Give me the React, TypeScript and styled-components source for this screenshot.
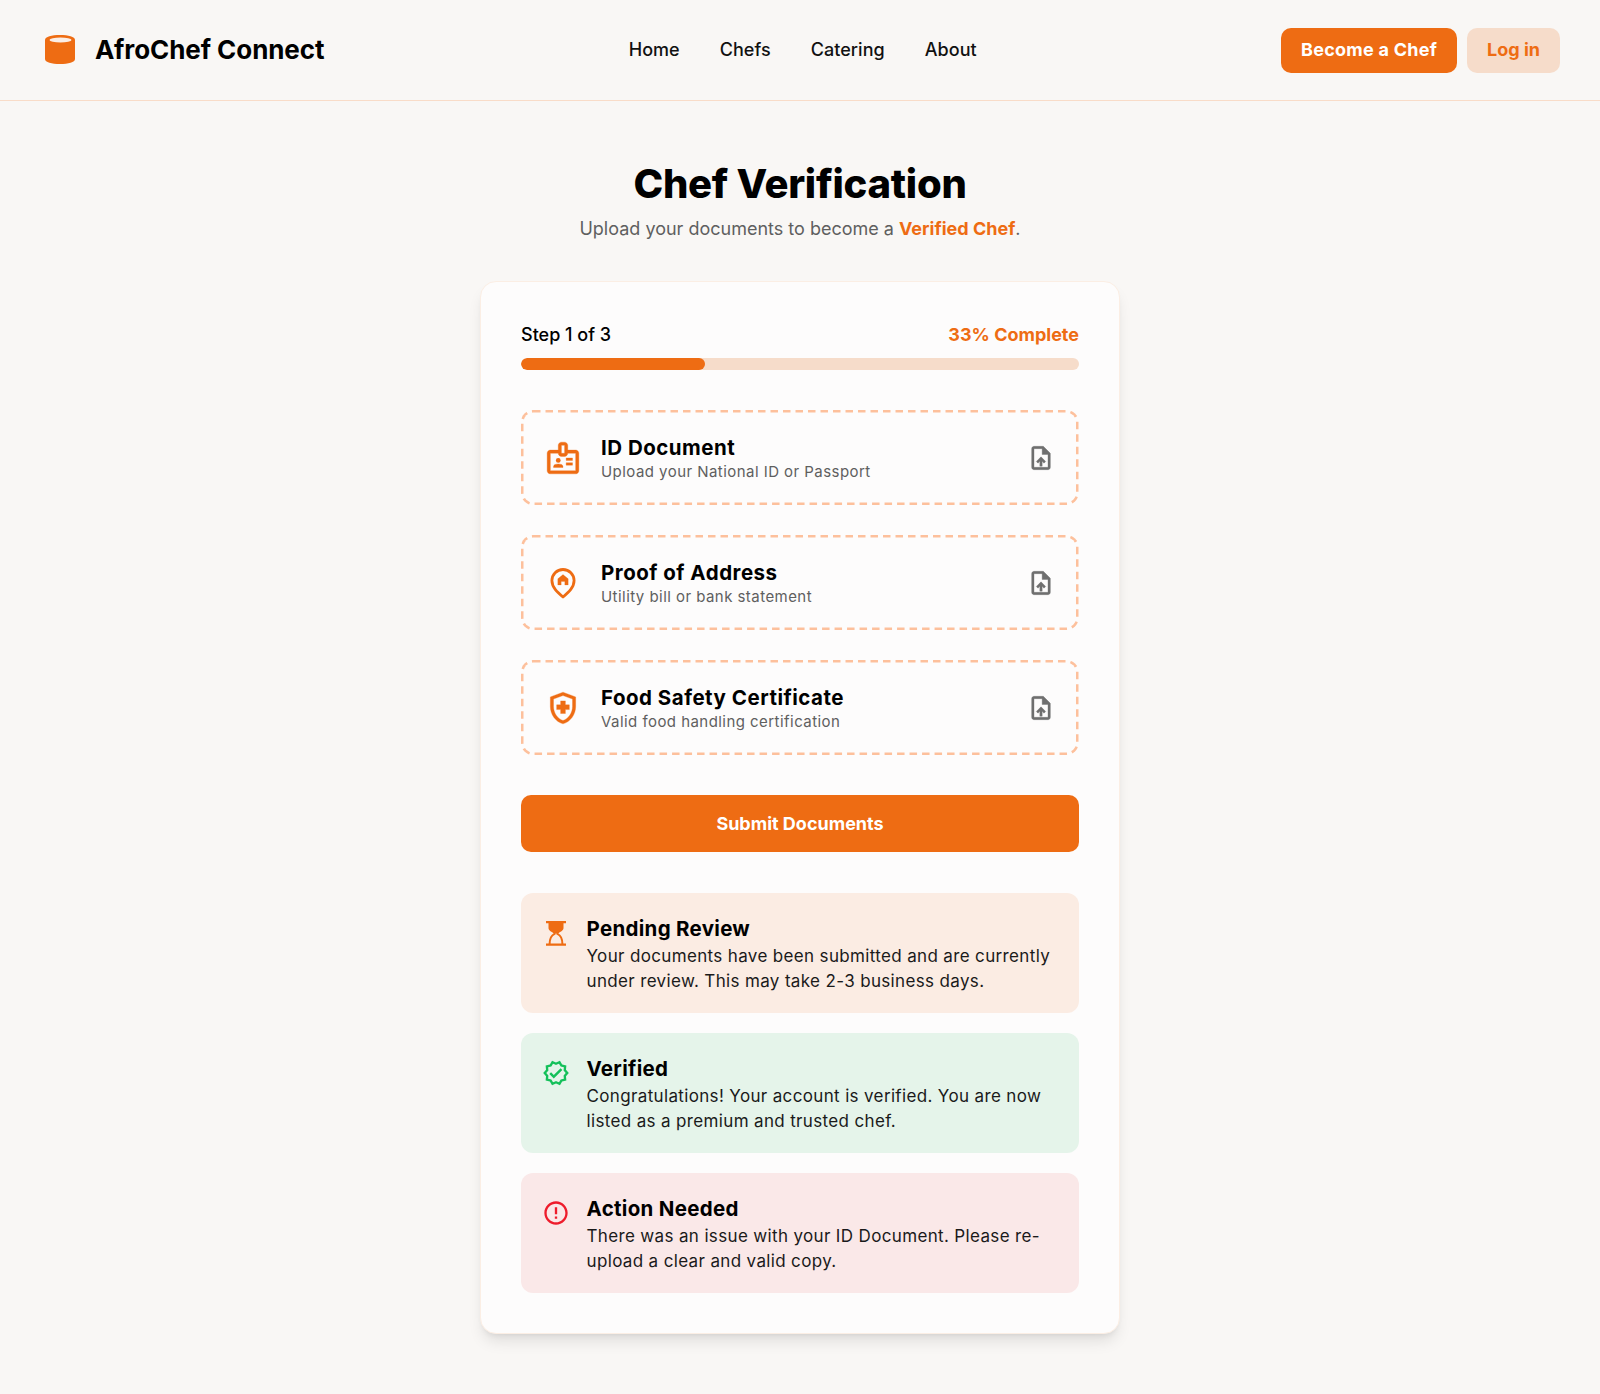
import React from "react";
import styled, { createGlobalStyle } from "styled-components";
import { MdOutlineBadge, MdOutlineUploadFile, MdOutlineHealthAndSafety, MdOutlineVerified, MdErrorOutline } from "react-icons/md";

const ORANGE = "#ee6c13";
const FONT = `Inter, "Noto Sans", "Liberation Sans", sans-serif`;

const Global = createGlobalStyle`
  html, body { margin: 0; padding: 0; background: #f9f7f5; }
  body { font-family: ${FONT}; color: #000; }
  *, *::before, *::after { box-sizing: border-box; }
`;

const Page = styled.div`
  min-height: 1394px;
  display: flex;
  flex-direction: column;
`;
const Header = styled.header`
  height: 101px;
  border-bottom: 1px solid #f9dcc8;
  padding: 0 40px;
  display: flex;
  align-items: center;
  justify-content: space-between;
`;
const Brand = styled.div`
  display: flex;
  align-items: center;
  gap: 15px;
`;
const BrandName = styled.span`
  font-size: 26px;
  line-height: 32px;
  padding-bottom: 1px;
  font-weight: 700;
  letter-spacing: -0.08px;
`;
const Nav = styled.nav`
  display: flex;
  gap: 40px;
  padding-bottom: 2px;
`;
const NavLink = styled.a`
  font-size: 18px;
  font-weight: 500;
  color: #111;
  letter-spacing: 0.05px;
`;
const Actions = styled.div`
  display: flex;
  gap: 10px;
`;
const HeaderButton = styled.button<{ $primary?: boolean }>`
  height: 45px;
  padding: 0 20px 2px;
  border: none;
  border-radius: 10px;
  font-family: ${FONT};
  font-size: 18px;
  font-weight: 700;
  letter-spacing: ${(p) => (p.$primary ? "0.25px" : "0")};
  background: ${(p) => (p.$primary ? ORANGE : "#f6dcca")};
  color: ${(p) => (p.$primary ? "#fff" : ORANGE)};
`;
const Main = styled.main`
  display: flex;
  flex-direction: column;
  align-items: center;
  padding-top: 59px;
`;
const Title = styled.h1`
  margin: 0;
  font-size: 40px;
  line-height: 48px;
  font-weight: 800;
  letter-spacing: -0.26px;
`;
const Subtitle = styled.p`
  margin: 7px 0 0;
  font-size: 18px;
  line-height: 28px;
  color: #5f5f5f;
`;
const Accent = styled.span`
  color: ${ORANGE};
  font-weight: 700;
`;
const Card = styled.section`
  width: 640px;
  margin-top: 38px;
  padding: 40px;
  background: #fdfcfc;
  border: 1px solid #fbeee4;
  border-radius: 16px;
  box-shadow: 0 10px 15px -3px rgba(0, 0, 0, 0.1), 0 4px 6px -4px rgba(0, 0, 0, 0.1);
  display: flex;
  flex-direction: column;
`;
const StepRow = styled.div`
  display: flex;
  justify-content: space-between;
  align-items: center;
  height: 24px;
  font-size: 18px;
  font-weight: 500;
`;
const Percent = styled.span`
  color: ${ORANGE};
  font-weight: 700;
`;
const Track = styled.div`
  height: 12px;
  margin-top: 12px;
  border-radius: 6px;
  background: #f6dcca;
  overflow: hidden;
`;
const Fill = styled.div`
  height: 100%;
  border-radius: 6px;
  background: ${ORANGE};
`;
const Uploads = styled.div`
  margin-top: 40px;
  display: flex;
  flex-direction: column;
  gap: 30px;
`;
/* The dashed outline is 2.5px thick with 7.5/5 dashes: a 2px border on an overlay scaled by 1.25. */
const UploadBox = styled.div`
  position: relative;
  height: 95px;
  padding: 0 24px;
  display: flex;
  align-items: center;
  gap: 20px;
  color: ${ORANGE};
  &::before {
    content: "";
    position: absolute;
    top: 0;
    left: 0;
    width: 80%;
    height: 80%;
    border: 2px dashed #fdc09c;
    border-radius: 9.6px;
    transform: scale(1.25);
    transform-origin: 0 0;
    pointer-events: none;
  }
`;
const LeadIcon = styled.span`
  flex: none;
  width: 36px;
  height: 36px;
  display: flex;
  align-items: center;
  justify-content: center;
  svg {
    flex: none;
  }
  svg path:not([fill="none"]) {
    stroke: currentColor;
    stroke-width: 0.2px;
  }
`;
const UploadText = styled.div`
  flex: 1;
  display: flex;
  flex-direction: column;
  padding-top: 1px;
`;
const UploadTitle = styled.div`
  font-size: 20.5px;
  line-height: 26px;
  font-weight: 700;
  letter-spacing: 0.5px;
  color: #000;
`;
const UploadHint = styled.div`
  margin-top: 1px;
  font-size: 15px;
  line-height: 20px;
  letter-spacing: 0.45px;
  color: #5f5f5f;
`;
const UploadIcon = styled.span`
  display: flex;
  color: #6f6f6f;
  svg path:not([fill="none"]) {
    stroke: currentColor;
    stroke-width: 0.3px;
  }
`;
const Submit = styled.button`
  margin-top: 40px;
  height: 57px;
  border: none;
  border-radius: 10px;
  background: ${ORANGE};
  color: #fff;
  font-family: ${FONT};
  font-size: 18px;
  font-weight: 700;
`;
const Alerts = styled.div`
  margin-top: 41px;
  display: flex;
  flex-direction: column;
  gap: 20px;
`;
const tones = {
  pending: { bg: "#fbece3", fg: ORANGE },
  ok: { bg: "#e5f4ea", fg: "#14c05a" },
  bad: { bg: "#fae8e8", fg: "#ee1c2c" },
};
type Tone = keyof typeof tones;
const Alert = styled.div<{ $tone: Tone }>`
  background: ${(p) => tones[p.$tone].bg};
  border-radius: 12px;
  padding: 20.5px 20px 19.5px 21px;
  display: flex;
  gap: 16.5px;
`;
const AlertIcon = styled.span<{ $tone: Tone }>`
  flex: none;
  width: 28px;
  height: 28px;
  margin-top: 5.5px;
  display: flex;
  align-items: center;
  justify-content: center;
  color: ${(p) => tones[p.$tone].fg};
`;
const AlertBody = styled.div`
  flex: 1;
`;
const AlertTitle = styled.div`
  font-size: 20.5px;
  line-height: 30px;
  font-weight: 700;
  letter-spacing: 0.3px;
`;
const AlertText = styled.div`
  font-size: 17px;
  line-height: 25px;
  letter-spacing: 0.35px;
  color: #1a1a1a;
`;

const LogoMark = () => (
  <svg width="40" height="40" viewBox="0 0 40 40" aria-hidden="true">
    <path d="M5 10c0-3.300 6.700-5 15-5s15 1.700 15 5v19c0 3.300-6.700 5-15 5S5 32.300 5 29V10z" fill={ORANGE} />
    <ellipse cx="20.500" cy="10" rx="11" ry="2.600" fill="#fbeee6" />
  </svg>
);
const AddressIcon = () => (
  <svg width="36" height="36" viewBox="0 0 36 36" aria-hidden="true">
    <path d="M18 32c-5.500-4.700-11.100-9.500-11.100-16.400A11.100 11.100 0 0 1 29.100 15.600C29.100 22.500 23.500 27.300 18 32z" fill="none" stroke="currentColor" strokeWidth="2.800" strokeLinejoin="round" />
    <path d="M18 9.500l5.200 4.300V20h-3.400v-3.500h-3.600V20h-3.400v-6.200z" fill="currentColor" />
  </svg>
);
const Hourglass = () => (
  <svg width="20" height="25" viewBox="0 0 20 25" aria-hidden="true">
    <path d="M0 0h20v2.200H0zM0 22.500h20v2.200H0z" fill="currentColor" />
    <path d="M2.500 2h15v5c0 2.500-3.500 4-5.500 5.500v0h-4C6 11 2.500 9.500 2.500 7z" fill="currentColor" />
    <path d="M8.600 11.800v1C6 14 3.600 16.500 3.600 23M11.400 11.800v1C14 14 16.400 16.500 16.400 23" fill="none" stroke="currentColor" strokeWidth="2" />
  </svg>
);

const docs = [
  { icon: <MdOutlineBadge size={38} />, title: "ID Document", hint: "Upload your National ID or Passport" },
  { icon: <AddressIcon />, title: "Proof of Address", hint: "Utility bill or bank statement" },
  { icon: <MdOutlineHealthAndSafety size={38} />, title: "Food Safety Certificate", hint: "Valid food handling certification" },
];
const notices: { tone: Tone; icon: React.ReactNode; title: string; text: string }[] = [
  { tone: "pending", icon: <Hourglass />, title: "Pending Review", text: "Your documents have been submitted and are currently under review. This may take 2-3 business days." },
  { tone: "ok", icon: <MdOutlineVerified size={28} />, title: "Verified", text: "Congratulations! Your account is verified. You are now listed as a premium and trusted chef." },
  { tone: "bad", icon: <MdErrorOutline size={28} />, title: "Action Needed", text: "There was an issue with your ID Document. Please re-upload a clear and valid copy." },
];

export default function App() {
  return (
    <Page>
      <Global />
      <Header>
        <Brand>
          <LogoMark />
          <BrandName>AfroChef Connect</BrandName>
        </Brand>
        <Nav>
          <NavLink>Home</NavLink>
          <NavLink>Chefs</NavLink>
          <NavLink>Catering</NavLink>
          <NavLink>About</NavLink>
        </Nav>
        <Actions>
          <HeaderButton $primary>Become a Chef</HeaderButton>
          <HeaderButton>Log in</HeaderButton>
        </Actions>
      </Header>
      <Main>
        <Title>Chef Verification</Title>
        <Subtitle>
          Upload your documents to become a <Accent>Verified Chef</Accent>.
        </Subtitle>
        <Card>
          <StepRow>
            <span>Step 1 of 3</span>
            <Percent>33% Complete</Percent>
          </StepRow>
          <Track>
            <Fill style={{ width: "33%" }} />
          </Track>
          <Uploads>
            {docs.map((d) => (
              <UploadBox key={d.title}>
                <LeadIcon>{d.icon}</LeadIcon>
                <UploadText>
                  <UploadTitle>{d.title}</UploadTitle>
                  <UploadHint>{d.hint}</UploadHint>
                </UploadText>
                <UploadIcon>
                  <MdOutlineUploadFile size={28} />
                </UploadIcon>
              </UploadBox>
            ))}
          </Uploads>
          <Submit>Submit Documents</Submit>
          <Alerts>
            {notices.map((n) => (
              <Alert key={n.title} $tone={n.tone}>
                <AlertIcon $tone={n.tone}>{n.icon}</AlertIcon>
                <AlertBody>
                  <AlertTitle>{n.title}</AlertTitle>
                  <AlertText>{n.text}</AlertText>
                </AlertBody>
              </Alert>
            ))}
          </Alerts>
        </Card>
      </Main>
    </Page>
  );
}
